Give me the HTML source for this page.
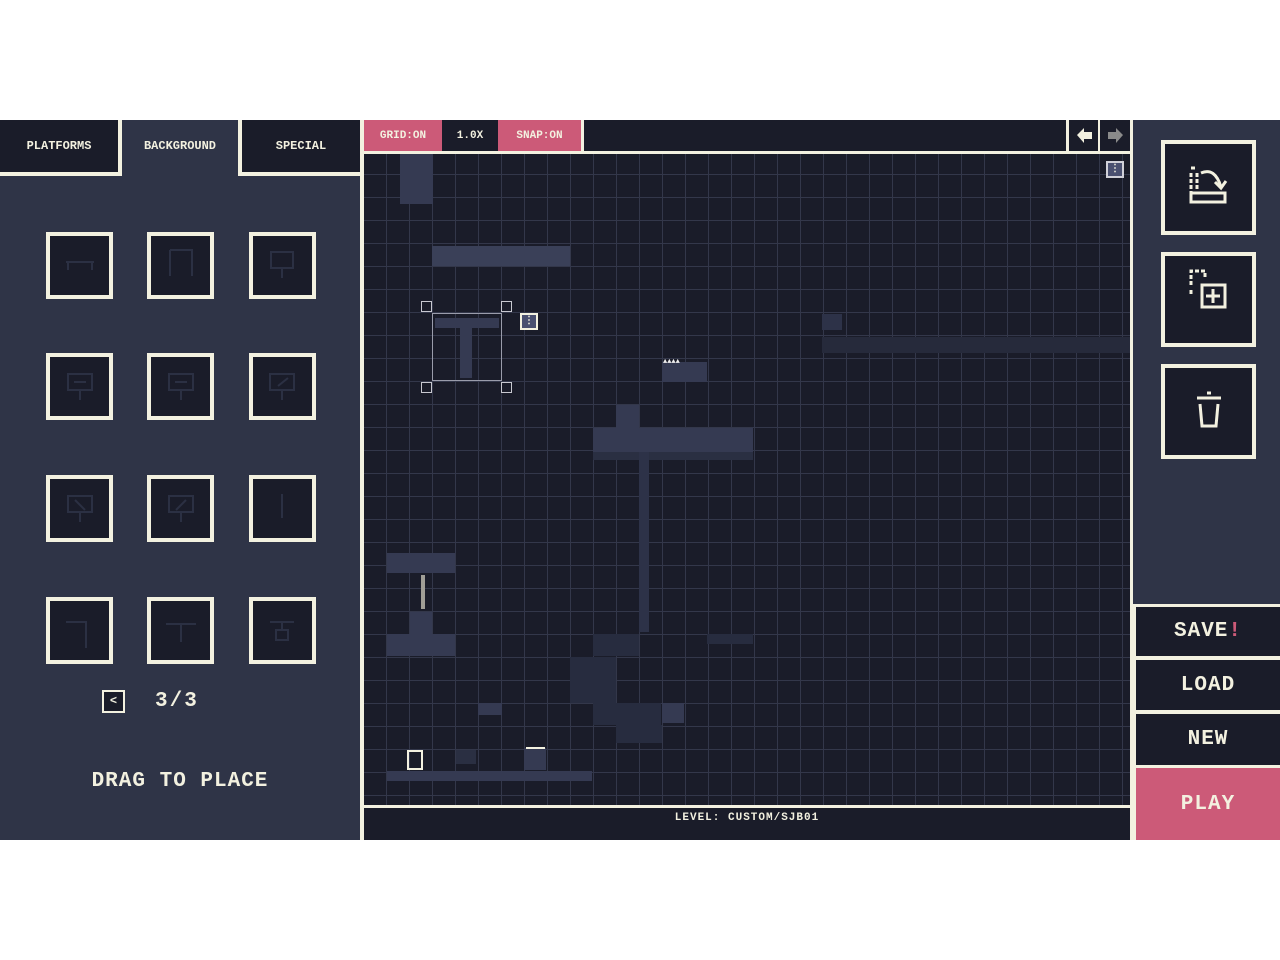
<!DOCTYPE html>
<html><head><meta charset="utf-8"><style>
*{margin:0;padding:0;box-sizing:border-box}
body{width:1280px;height:960px;background:#fff;position:relative;overflow:hidden;font-family:"Liberation Mono","DejaVu Sans Mono",monospace;font-weight:bold;color:#f3f1e0}
.a{position:absolute}
.dk{background:#1a1c29}
.pn{background:#2f3447}
.cr{background:#f3f1e0}
.pk{background:#cc5a78}
.tile{position:absolute;width:67px;height:67px;border:4px solid #f3f1e0;background:#1a1c29}
.rb{position:absolute;left:1161px;width:95px;height:95px;border:4px solid #f3f1e0;background:#1a1c29}
.t{display:flex;align-items:center;justify-content:center}
.o{position:absolute;background:#353a52}
</style></head><body>
<div class="a pn" style="left:0;top:120px;width:364px;height:720px"></div>
<div class="a dk t" style="left:0;top:120px;width:118px;height:52px;font-size:12px">PLATFORMS</div>
<div class="a cr" style="left:0;top:172px;width:122px;height:4px"></div>
<div class="a cr" style="left:118px;top:120px;width:4px;height:56px"></div>
<div class="a t" style="left:122px;top:120px;width:116px;height:52px;font-size:12px">BACKGROUND</div>
<div class="a cr" style="left:238px;top:120px;width:4px;height:56px"></div>
<div class="a dk t" style="left:242px;top:120px;width:118px;height:52px;font-size:12px">SPECIAL</div>
<div class="a cr" style="left:238px;top:172px;width:122px;height:4px"></div>
<div class="a cr" style="left:360px;top:120px;width:4px;height:720px"></div>

<div class="tile" style="left:46px;top:232px"></div><div class="tile" style="left:147px;top:232px"></div><div class="tile" style="left:249px;top:232px"></div>
<div class="tile" style="left:46px;top:353px"></div><div class="tile" style="left:147px;top:353px"></div><div class="tile" style="left:249px;top:353px"></div>
<div class="tile" style="left:46px;top:475px"></div><div class="tile" style="left:147px;top:475px"></div><div class="tile" style="left:249px;top:475px"></div>
<div class="tile" style="left:46px;top:597px"></div><div class="tile" style="left:147px;top:597px"></div><div class="tile" style="left:249px;top:597px"></div>
<svg class="a" style="left:0;top:0" width="360" height="700" fill="none" stroke="#2b3043" stroke-width="2">
<path d="M66 262h28M68 262v8M92 262v8"/>
<path d="M170 250h22v26M170 250v26"/>
<rect x="271" y="252" width="22" height="16"/><path d="M282 268v10"/>
<rect x="68" y="374" width="24" height="16"/><path d="M80 390v10M74 382h12"/>
<rect x="169" y="374" width="24" height="16"/><path d="M181 390v10M175 382h12"/>
<rect x="270" y="374" width="24" height="16"/><path d="M282 390v10M278 386l10-8"/>
<rect x="68" y="496" width="24" height="16"/><path d="M80 512v10M75 500l10 10"/>
<rect x="169" y="496" width="24" height="16"/><path d="M181 512v10M176 510l10-10"/>
<path d="M282 494v24"/>
<path d="M66 622h20v26"/><path d="M166 624h30M181 624v18"/><path d="M270 622h24M282 622v8"/><rect x="276" y="630" width="12" height="10"/>
</svg>
<div class="a dk" style="left:102px;top:690px;width:23px;height:23px;border:2px solid #f3f1e0;font-size:12px;text-align:center;line-height:19px">&lt;</div>
<div class="a" style="left:155px;top:690px;font-size:21px;letter-spacing:2px">3/3</div>
<div class="a" style="left:0;top:770px;width:360px;text-align:center;font-size:21px;letter-spacing:1px">DRAG TO PLACE</div>

<div class="a dk" style="left:364px;top:120px;width:766px;height:31px"></div>
<div class="a pk t" style="left:364px;top:120px;width:78px;height:31px;font-size:11px">GRID:ON</div>
<div class="a t" style="left:446px;top:120px;width:48px;height:31px;font-size:11px">1.0X</div>
<div class="a pk t" style="left:498px;top:120px;width:83px;height:31px;font-size:11px">SNAP:ON</div>
<div class="a cr" style="left:581px;top:120px;width:3px;height:31px"></div>
<div class="a cr" style="left:1066px;top:120px;width:3px;height:31px"></div>
<div class="a cr" style="left:1098px;top:120px;width:2px;height:31px"></div>
<svg class="a" style="left:1069px;top:120px" width="62" height="31"><path d="M8 15l7-7v4h8v7h-8v4z" fill="#f3f1e0"/><path d="M54 15l-7-7v4h-8v7h8v4z" fill="#8a8a8a"/></svg>
<div class="a cr" style="left:364px;top:151px;width:769px;height:3px"></div>

<div class="a" style="left:364px;top:154px;width:766px;height:651px;background-color:#1a1c29;background-image:linear-gradient(90deg,#33374a 1px,transparent 1px),linear-gradient(#33374a 1px,transparent 1px);background-size:23px 23px;background-position:22px 20px"></div>
<div class="o" style="left:400px;top:154px;width:33px;height:50px"></div>
<div class="o" style="left:432px;top:246px;width:138px;height:20px;background:#3a4058"></div>
<div class="a" style="left:432px;top:313px;width:70px;height:68px;border:1px solid #9a9cab"></div>
<div class="o" style="left:435px;top:318px;width:64px;height:10px"></div><div class="o" style="left:460px;top:328px;width:12px;height:50px"></div>
<div class="a" style="left:421px;top:301px;width:11px;height:11px;border:1px solid #c8c8d0"></div>
<div class="a" style="left:501px;top:301px;width:11px;height:11px;border:1px solid #c8c8d0"></div>
<div class="a" style="left:421px;top:382px;width:11px;height:11px;border:1px solid #c8c8d0"></div>
<div class="a" style="left:501px;top:382px;width:11px;height:11px;border:1px solid #c8c8d0"></div>
<div class="a" style="left:520px;top:313px;width:18px;height:17px;border:2px solid #f3f1e0;background:#4a5070;font-size:10px;text-align:center;line-height:13px">⋮</div>
<div class="a" style="left:1106px;top:161px;width:18px;height:17px;border:2px solid #d0d0d8;background:#4a5070;font-size:10px;text-align:center;line-height:13px">⋮</div>
<div class="o" style="left:662px;top:362px;width:45px;height:20px"></div>
<div class="o" style="left:616px;top:405px;width:23px;height:23px"></div>
<div class="o" style="left:593px;top:428px;width:160px;height:24px"></div>
<div class="o" style="left:593px;top:452px;width:160px;height:8px;background:#2a2f42"></div>
<div class="o" style="left:639px;top:452px;width:10px;height:180px;background:#2d3248"></div>
<div class="o" style="left:822px;top:337px;width:308px;height:16px;background:#262a3b"></div>
<div class="o" style="left:822px;top:314px;width:20px;height:16px;background:#2d3248"></div>
<div class="o" style="left:387px;top:553px;width:68px;height:20px"></div>
<div class="a" style="left:421px;top:575px;width:4px;height:34px;background:#a09e96"></div>
<div class="o" style="left:410px;top:612px;width:22px;height:22px"></div>
<div class="o" style="left:387px;top:634px;width:68px;height:22px"></div>
<div class="o" style="left:593px;top:634px;width:46px;height:22px;background:#272c3f"></div>
<div class="o" style="left:570px;top:657px;width:46px;height:46px;background:#272c3f"></div>
<div class="o" style="left:593px;top:703px;width:68px;height:22px;background:#272c3f"></div>
<div class="o" style="left:616px;top:725px;width:46px;height:18px;background:#272c3f"></div>
<div class="o" style="left:707px;top:634px;width:46px;height:10px;background:#272c3f"></div>
<div class="o" style="left:478px;top:703px;width:24px;height:12px"></div>
<div class="o" style="left:662px;top:703px;width:22px;height:20px"></div>
<div class="o" style="left:387px;top:771px;width:205px;height:10px"></div>
<div class="o" style="left:524px;top:748px;width:22px;height:22px"></div>
<div class="a cr" style="left:526px;top:747px;width:19px;height:2px"></div>
<div class="a" style="left:407px;top:750px;width:16px;height:20px;border:2px solid #f3f1e0"></div>
<div class="o" style="left:456px;top:750px;width:20px;height:14px;background:#2a2f42"></div>
<div class="a" style="left:663px;top:358px;font-size:7px;color:#eee">▲▲▲▲</div>

<div class="a cr" style="left:364px;top:805px;width:769px;height:3px"></div>
<div class="a dk" style="left:364px;top:808px;width:766px;height:32px;font-size:11px;text-align:center;line-height:20px;letter-spacing:1px">LEVEL: CUSTOM/SJB01</div>

<div class="a cr" style="left:1130px;top:120px;width:3px;height:720px"></div>
<div class="a pn" style="left:1133px;top:120px;width:147px;height:484px"></div>
<div class="rb" style="top:140px"></div><div class="rb" style="top:252px"></div><div class="rb" style="top:364px"></div>
<svg class="a" style="left:1161px;top:140px" width="95" height="320" fill="none" stroke="#f3f1e0" stroke-width="3">
<path d="M30 33v20M30 28h6M36 33v18" stroke-dasharray="4 2"/><rect x="30" y="53" width="34" height="9"/><path d="M40 33q14-6 20 14M54 42l6 6 5-7"/>
<path d="M30 145v-14h14v6M30 150v5" stroke-dasharray="4 2"/><rect x="41" y="145" width="23" height="22"/><path d="M52 149v14M45 156h14"/>
<path d="M36 258h24M46 253h4M39 264l2 22h14l2-22"/>
</svg>
<div class="a cr" style="left:1133px;top:604px;width:147px;height:236px"></div>
<div class="a dk t" style="left:1136px;top:607px;width:144px;height:49px;font-size:21px;letter-spacing:1px">SAVE<span style="color:#cc5a78">!</span></div>
<div class="a dk t" style="left:1136px;top:660px;width:144px;height:50px;font-size:21px;letter-spacing:1px">LOAD</div>
<div class="a dk t" style="left:1136px;top:714px;width:144px;height:51px;font-size:21px;letter-spacing:1px">NEW</div>
<div class="a pk t" style="left:1136px;top:768px;width:144px;height:72px;font-size:21px;letter-spacing:1px">PLAY</div>
</body></html>
